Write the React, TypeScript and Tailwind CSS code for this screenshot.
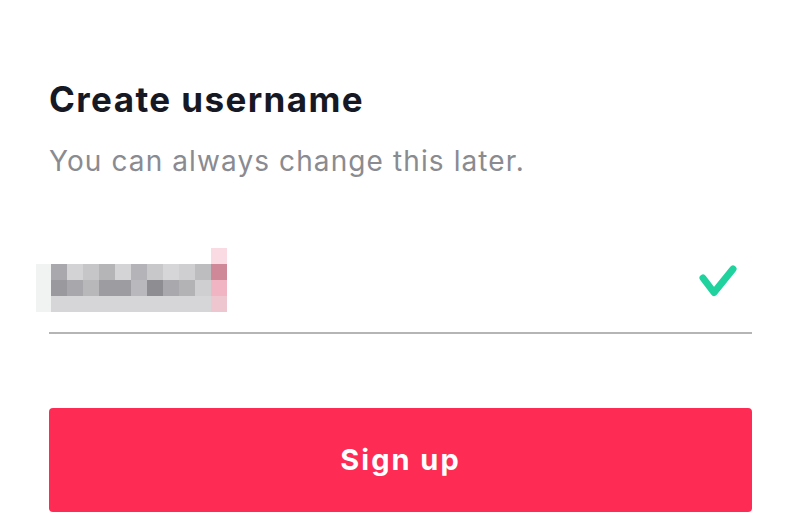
import React from "react";

const rows: string[][] = [
  ["transparent", "transparent", "transparent", "transparent", "transparent", "transparent", "transparent", "transparent", "transparent", "transparent", "transparent", "#fbdbe3"],
  ["#f1f3f2", "#a9a9ad", "#d3d3d5", "#c6c6c8", "#b5b5b8", "#d4d4d6", "#b4b4b8", "#c8c8ca", "#d6d6d8", "#cfcfd1", "#bdbdc0", "#cf8898"],
  ["#f1f3f2", "#9a9a9e", "#a8a8ac", "#b8b8bb", "#9d9da1", "#9d9da1", "#b9b9bd", "#8e8e92", "#a9a9ad", "#b3b3b6", "#cfcfd2", "#f0b4c2"],
  ["#f1f3f2", "#d6d6d8", "#d6d6d8", "#d6d6d8", "#d6d6d8", "#d6d6d8", "#d6d6d8", "#d6d6d8", "#d6d6d8", "#d6d6d8", "#d6d6d8", "#eec6d0"],
];

function Pixelated() {
  return (
    <div className="-ml-[13px] grid grid-cols-[15px_repeat(11,16px)] grid-rows-[16px_16px_16px_16px] blur-[0.6px]">
      {rows.flatMap((r, i) =>
        r.map((c, j) => <div key={`${i}-${j}`} style={{ backgroundColor: c }} />)
      )}
    </div>
  );
}

export default function App() {
  return (
    <div
      className="w-[800px] h-[514px] bg-white pl-[49px] pr-[48px] overflow-hidden"
      style={{ fontFamily: "Inter, 'Noto Sans', sans-serif" }}
    >
      <h1 className="mt-[79px] text-[35px] leading-[40px] font-bold tracking-[1.4px] text-[#161823]">
        Create username
      </h1>
      <p className="mt-[25px] text-[28px] leading-[34px] tracking-[1.1px] text-[#8a8b91]">
        You can always change this later.
      </p>
      <div className="mt-[70px] h-[86px] flex justify-between items-start border-b-2 border-[#b5b5b5]">
        <Pixelated />
        <svg
          className="mt-[14px] mr-[12px]"
          width="44"
          height="37"
          viewBox="0 0 44 37"
          fill="none"
        >
          <path
            d="M7 16 L18 30.5 L37 7"
            stroke="#20d29e"
            strokeWidth="7"
            strokeLinecap="round"
            strokeLinejoin="round"
          />
        </svg>
      </div>
      <button className="mt-[74px] w-full h-[104px] rounded-[4px] bg-[#fe2c55] text-white text-[29px] font-bold tracking-[2px] flex items-center justify-center">
        Sign up
      </button>
    </div>
  );
}
